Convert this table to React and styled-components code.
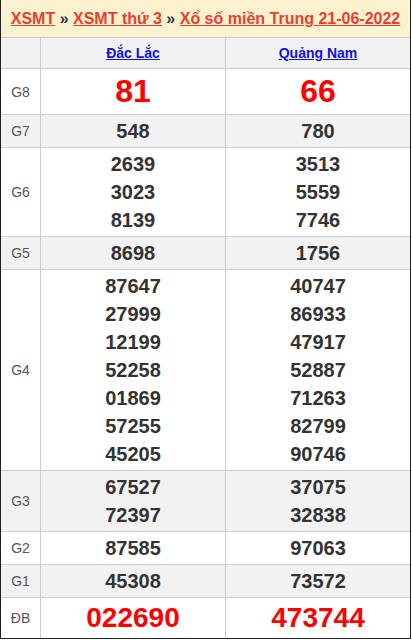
import React from 'react';
import styled, { createGlobalStyle } from 'styled-components';

const GlobalStyle = createGlobalStyle`
  body {
    margin: 0;
    background: #fff;
    font-family: "Liberation Sans", Arial, sans-serif;
  }
`;

const Board = styled.div`
  width: 409px;
  border-left: 1px solid #222;
  border-right: 1px solid #222;
  border-bottom: 1px solid #222;
`;

const Title = styled.div`
  height: 37px;
  background: #fdf2d0;
  display: flex;
  align-items: center;
  justify-content: center;
  font-size: 16px;
  font-weight: bold;
  color: #333;
  white-space: pre;
`;

const TitleLink = styled.a`
  color: #e8402f;
  text-decoration: underline;
`;

const Row = styled.div`
  display: grid;
  grid-template-columns: 39px 185px 1fr;
  border-top: 1px solid #ccc;
  background: ${(p) => (p.$shaded ? '#f2f2f2' : '#fff')};
`;

const Label = styled.div`
  display: flex;
  align-items: center;
  justify-content: center;
  font-size: 14px;
  color: #555;
`;

const Cell = styled.div`
  border-left: 1px solid #ccc;
  padding: 2px 0;
  display: flex;
  flex-direction: column;
  align-items: center;
  justify-content: center;
`;

const Num = styled.div`
  font-weight: bold;
  font-size: ${(p) => p.$size || 20}px;
  line-height: ${(p) => p.$lh || 28}px;
  color: ${(p) => (p.$red ? '#f00' : '#333')};
`;

const Province = styled.a`
  font-size: 14px;
  font-weight: bold;
  color: #1010e0;
  text-decoration: underline;
  line-height: 26px;
`;

const prizes = [
  { label: 'G8', a: ['81'], b: ['66'], size: 32, lh: 41, red: true },
  { label: 'G7', a: ['548'], b: ['780'] },
  { label: 'G6', a: ['2639', '3023', '8139'], b: ['3513', '5559', '7746'] },
  { label: 'G5', a: ['8698'], b: ['1756'] },
  {
    label: 'G4',
    a: ['87647', '27999', '12199', '52258', '01869', '57255', '45205'],
    b: ['40747', '86933', '47917', '52887', '71263', '82799', '90746'],
  },
  { label: 'G3', a: ['67527', '72397'], b: ['37075', '32838'] },
  { label: 'G2', a: ['87585'], b: ['97063'] },
  { label: 'G1', a: ['45308'], b: ['73572'] },
  { label: 'ĐB', a: ['022690'], b: ['473744'], size: 28, lh: 36, red: true },
];

const App = () => {
  return (
    <>
      <GlobalStyle />
      <Board>
        <Title>
          <TitleLink>XSMT</TitleLink>
          {' » '}
          <TitleLink>XSMT thứ 3</TitleLink>
          {' » '}
          <TitleLink>Xổ số miền Trung 21-06-2022</TitleLink>
        </Title>
        <Row $shaded>
          <Label />
          <Cell>
            <Province>Đắc Lắc</Province>
          </Cell>
          <Cell>
            <Province>Quảng Nam</Province>
          </Cell>
        </Row>
        {prizes.map((p, i) => (
          <Row key={p.label} $shaded={i % 2 === 1}>
            <Label>{p.label}</Label>
            <Cell>
              {p.a.map((n) => (
                <Num key={n} $size={p.size} $lh={p.lh} $red={p.red}>{n}</Num>
              ))}
            </Cell>
            <Cell>
              {p.b.map((n) => (
                <Num key={n} $size={p.size} $lh={p.lh} $red={p.red}>{n}</Num>
              ))}
            </Cell>
          </Row>
        ))}
      </Board>
    </>
  );
};

export default App;
